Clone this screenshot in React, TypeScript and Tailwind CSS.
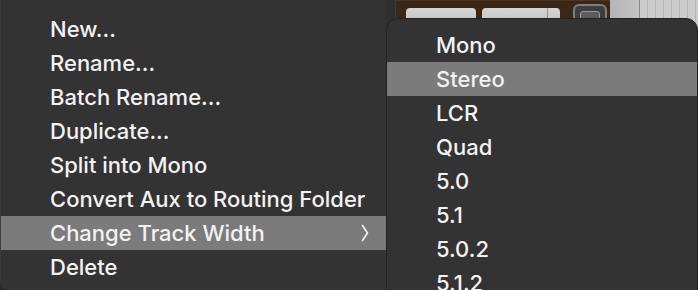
import React from "react";

const mainItems = [
  "New...",
  "Rename...",
  "Batch Rename...",
  "Duplicate...",
  "Split into Mono",
  "Convert Aux to Routing Folder",
  "Change Track Width",
  "Delete",
];

const widthItems = ["Mono", "Stereo", "LCR", "Quad", "5.0", "5.1", "5.0.2", "5.1.2"];

function Chevron() {
  return (
    <svg width="8" height="18" viewBox="0 0 8 18" className="shrink-0">
      <polyline points="1.5,1.5 6.5,9 1.5,16.5" fill="none" stroke="#f2f2f2" strokeWidth="1.6" strokeLinejoin="round" strokeLinecap="round" />
    </svg>
  );
}

function MenuRow({ label, active, submenu }: { label: string; active?: boolean; submenu?: boolean }) {
  return (
    <div
      className={`flex h-[34px] items-center justify-between pl-[49px] pr-[17px] text-[22px] font-medium leading-none text-[#f2f2f2] ${
        active ? "bg-[#7b7b7b]" : ""
      }`}
    >
      <span>{label}</span>
      {submenu && <Chevron />}
    </div>
  );
}

function Toolbar() {
  return (
    <div className="flex h-[32px]">
      <div className="w-[10px] bg-[#2e2e2e] border-r border-[#3c3c3c]" />
      <div className="flex w-[214px] items-start bg-[#3a2718] border-t border-[#4a3424]">
        <div className="ml-[10px] mt-[7px] h-[24px] w-[70px] rounded-[4px] bg-gradient-to-b from-[#d4d4d4] to-[#b9b9b9]" />
        <div className="ml-[6px] mt-[7px] flex h-[24px] w-[78px] rounded-[4px] bg-gradient-to-b from-[#d4d4d4] to-[#b9b9b9]">
          <div className="w-[66px] border-r border-[#8f8f8f]" />
        </div>
        <div className="ml-[13px] mt-[3px] flex h-[28px] w-[34px] items-start justify-center rounded-[6px] border-2 border-[#7e7e7e] bg-[#3e3e3e] pt-[5px]">
          <div className="h-[16px] w-[20px] rounded-[3px] border border-[#9a9a9a] bg-[#5c5c5c]" />
        </div>
      </div>
      <div className="w-[30px] bg-gradient-to-r from-[#b4b4b4] to-[#c4c4c4] border-r border-[#8a8a8a]" />
      <div className="flex-1 bg-[repeating-linear-gradient(90deg,#cdcdcd_0px,#cdcdcd_7px,#b5b5b5_7px,#b5b5b5_8px)]" />
    </div>
  );
}

export default function App() {
  return (
    <div
      className="relative flex h-[290px] w-[698px] overflow-hidden bg-[#2b2b2b]"
      style={{ fontFamily: "Inter, 'Noto Sans', sans-serif" }}
    >
      <div className="h-[291px] w-[386px] shrink-0 rounded-bl-[12px] border-l border-[#3d3d3d] bg-[#333333] pt-[12px]">
        {mainItems.map((label) => (
          <MenuRow
            key={label}
            label={label}
            active={label === "Change Track Width"}
            submenu={label === "Change Track Width"}
          />
        ))}
      </div>
      <div className="flex-1">
        <Toolbar />
      </div>
      <div className="absolute left-[386px] top-[18px] h-[290px] w-[312px] rounded-t-[12px] border border-[#222222] bg-[#333333] pt-[9px]">
        {widthItems.map((label) => (
          <MenuRow key={label} label={label} active={label === "Stereo"} />
        ))}
      </div>
    </div>
  );
}
